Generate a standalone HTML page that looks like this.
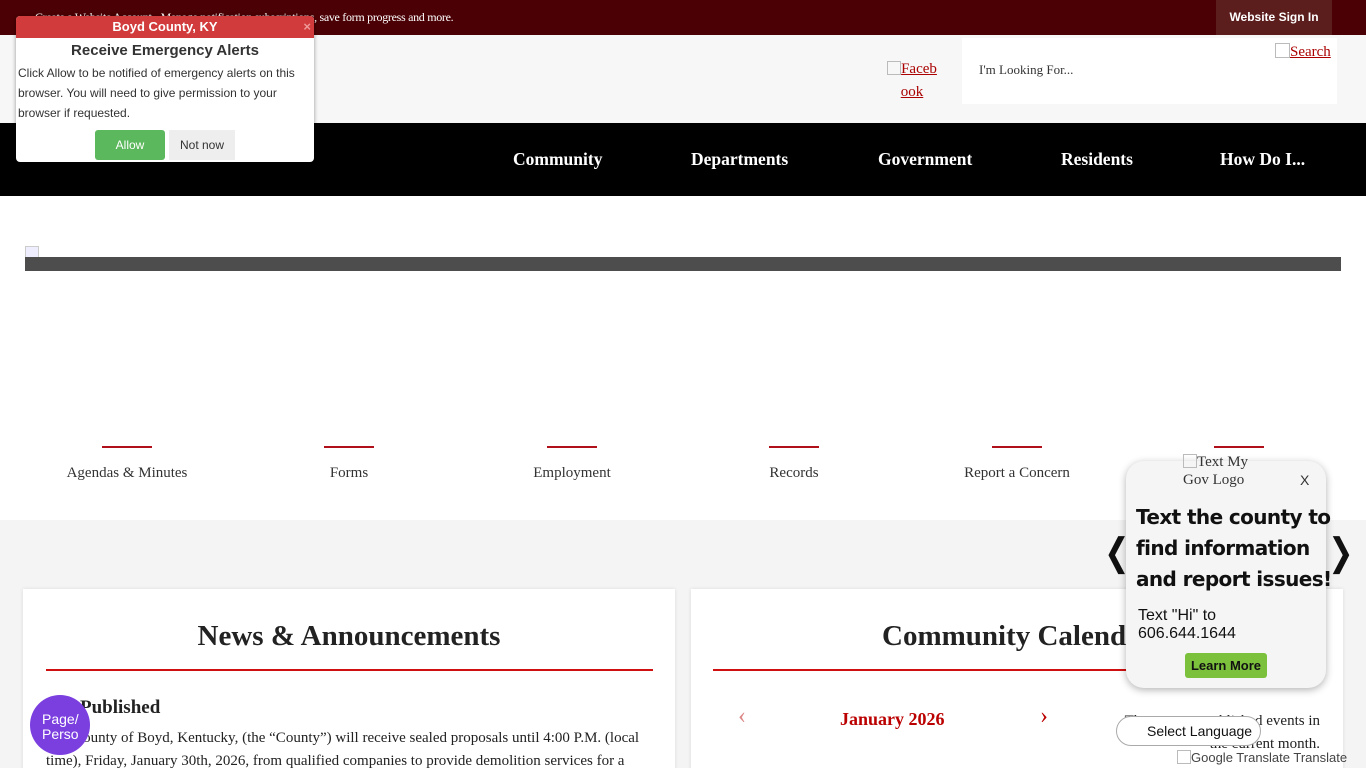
<!DOCTYPE html>
<html><head><style>
*{margin:0;padding:0;box-sizing:border-box}
html,body{width:1366px;height:768px;overflow:hidden}
body{position:relative;background:#f4f4f4;font-family:"Liberation Serif",serif}
.abs{position:absolute}
</style></head><body>
<div class="abs" style="left:0;top:0;width:1366px;height:35px;background:#4a0004"></div>
<div class="abs" style="left:35px;top:10px;color:#fff;font-size:12px;letter-spacing:-0.3px">Create a Website Account - Manage notification subscriptions, save form progress and more.</div>
<div class="abs" style="left:1216px;top:0;width:116px;height:35px;background:#5c1d1d;color:#fff;font:bold 12px 'Liberation Sans',sans-serif;text-align:center;line-height:35px">Website Sign In</div>
<div class="abs" style="left:0;top:35px;width:1366px;height:88px;background:#f7f7f7"></div>
<div class="abs" style="left:884px;top:58px;width:56px;text-align:center;color:#a00;font-size:15px;line-height:23px"><span style="display:inline-block;width:14px;height:14px;border:1px solid #bbb;vertical-align:-2px"></span><u>Faceb</u><br><u>ook</u></div>
<div class="abs" style="left:962px;top:38px;width:375px;height:66px;background:#fff"></div>
<div class="abs" style="left:979px;top:62px;font-size:13px;color:#333">I'm Looking For...</div>
<div class="abs" style="left:1275px;top:43px;color:#a00;font-size:15px"><span style="display:inline-block;width:15px;height:15px;border:1px solid #bbb;vertical-align:-2px"></span><u>Search</u></div>
<div class="abs" style="left:0;top:123px;width:1366px;height:73px;background:#000"></div>
<div class="abs" style="top:149px;left:0;width:1366px;color:#fff;font-weight:bold;font-size:17.5px">
<span class="abs" style="left:513px">Community</span><span class="abs" style="left:691px">Departments</span><span class="abs" style="left:878px">Government</span><span class="abs" style="left:1061px">Residents</span><span class="abs" style="left:1220px">How Do I...</span></div>
<div class="abs" style="left:0;top:196px;width:1366px;height:324px;background:#fff"></div>
<div class="abs" style="left:25px;top:246px;width:14px;height:16px;border:1px solid #ccc;background:#eef"></div>
<div class="abs" style="left:25px;top:257px;width:1316px;height:14px;background:#4d4d4d"></div>
<div class="abs" style="left:0;top:446px;width:1366px;font-size:15px;color:#333">
<div class="abs" style="left:27px;width:200px;text-align:center"><div style="width:50px;height:2px;background:#b0101a;margin:0 auto 17px"></div>Agendas &amp; Minutes</div>
<div class="abs" style="left:249px;width:200px;text-align:center"><div style="width:50px;height:2px;background:#b0101a;margin:0 auto 17px"></div>Forms</div>
<div class="abs" style="left:472px;width:200px;text-align:center"><div style="width:50px;height:2px;background:#b0101a;margin:0 auto 17px"></div>Employment</div>
<div class="abs" style="left:694px;width:200px;text-align:center"><div style="width:50px;height:2px;background:#b0101a;margin:0 auto 17px"></div>Records</div>
<div class="abs" style="left:917px;width:200px;text-align:center"><div style="width:50px;height:2px;background:#b0101a;margin:0 auto 17px"></div>Report a Concern</div>
<div class="abs" style="left:1139px;width:200px;text-align:center"><div style="width:50px;height:2px;background:#b0101a;margin:0 auto 17px"></div></div>
</div>
<div class="abs" style="left:23px;top:589px;width:652px;height:190px;background:#fff;box-shadow:0 0 4px rgba(0,0,0,.1)"></div>
<div class="abs" style="left:23px;top:620px;width:652px;text-align:center;font-size:29px;font-weight:bold;color:#222">News &amp; Announcements</div>
<div class="abs" style="left:46px;top:669px;width:607px;height:2px;background:#d01010"></div>
<div class="abs" style="left:80px;top:697px;font-size:19px;font-weight:bold;color:#222">Published</div>
<div class="abs" style="left:46px;top:727px;width:610px;font-size:15px;line-height:23px;color:#222">The County of Boyd, Kentucky, (the “County”) will receive sealed proposals until 4:00 P.M. (local time), Friday, January 30th, 2026, from qualified companies to provide demolition services for a</div>
<div class="abs" style="left:691px;top:589px;width:652px;height:190px;background:#fff;box-shadow:0 0 4px rgba(0,0,0,.1)"></div>
<div class="abs" style="left:882px;top:620px;font-size:29px;font-weight:bold;color:#222">Community Calendar</div>
<div class="abs" style="left:713px;top:669px;width:607px;height:2px;background:#d01010"></div>
<div class="abs" style="left:738px;top:703px;font-size:24px;color:#d88">‹</div>
<div class="abs" style="left:840px;top:709px;font-size:18px;font-weight:bold;color:#b00">January 2026</div>
<div class="abs" style="left:1040px;top:703px;font-size:24px;color:#b00">›</div>
<div class="abs" style="left:1120px;top:710px;width:200px;text-align:right;font-size:15px;line-height:23px;color:#222">There are no published events in the current month.</div>
<div class="abs" style="left:1101px;top:530px;font-size:38px;color:#111;transform:scaleX(.8)">❮</div>
<div class="abs" style="left:1325px;top:530px;font-size:38px;color:#111;transform:scaleX(.8)">❯</div>
<div class="abs" style="left:1126px;top:461px;width:200px;height:227px;background:#f5f5f5;border-radius:18px;box-shadow:0 2px 8px rgba(0,0,0,.3)"></div>
<div class="abs" style="left:1183px;top:453px;font-size:15px;line-height:18px;color:#333"><span style="display:inline-block;width:14px;height:14px;border:1px solid #bbb;vertical-align:-2px"></span>Text My<br>Gov Logo</div>
<div class="abs" style="left:1300px;top:472px;font:14px 'Liberation Sans',sans-serif;color:#333">X</div>
<div class="abs" style="left:1136px;top:502px;font:bold 20px/31px 'DejaVu Sans',sans-serif;color:#111;letter-spacing:-0.6px;white-space:nowrap">Text the county to<br>find information<br>and report issues!</div>
<div class="abs" style="left:1138px;top:607px;font:16px/18px 'Liberation Sans',sans-serif;color:#111">Text "Hi" to<br>606.644.1644</div>
<div class="abs" style="left:1185px;top:653px;width:82px;height:25px;background:#7cc13c;border-radius:3px;font:bold 13px/25px 'Liberation Sans',sans-serif;text-align:center;color:#111">Learn More</div>
<div class="abs" style="left:1116px;top:716px;width:145px;height:30px;background:#fff;border:1px solid #aaa;border-radius:15px;font:14px/28px 'Liberation Sans',sans-serif;color:#111;padding-left:30px">Select Language</div>
<div class="abs" style="left:1177px;top:750px;font:13px 'Liberation Sans',sans-serif;color:#444"><span style="display:inline-block;width:14px;height:14px;border:1px solid #bbb;vertical-align:-2px"></span>Google Translate Translate</div>
<div class="abs" style="left:30px;top:695px;width:60px;height:60px;border-radius:50%;background:#7b3fe0;color:#fff;font:14px/15px 'Liberation Sans',sans-serif;padding:17px 0 0 12px;overflow:hidden">Page/<br>Perso</div>
<div class="abs" style="left:16px;top:16px;width:298px;height:146px;background:#fff;border-radius:4px;box-shadow:0 1px 4px rgba(0,0,0,.4);font-family:'Liberation Sans',sans-serif;overflow:hidden">
<div style="height:22px;background:#d13b3b;color:#fff;font-weight:bold;font-size:13px;text-align:center;line-height:22px">Boyd County, KY<span style="position:absolute;right:3px;top:0;color:#e99">×</span></div>
<div style="text-align:center;font-weight:bold;font-size:15px;color:#333;margin-top:4px">Receive Emergency Alerts</div>
<div style="font-size:12px;line-height:20px;color:#333;padding:2px 2px;margin-top:2px">Click Allow to be notified of emergency alerts on this browser. You will need to give permission to your browser if requested.</div>
<div style="position:absolute;left:79px;top:114px;width:70px;height:30px;background:#5cb85c;border-radius:3px;color:#fff;font-size:12px;text-align:center;line-height:30px">Allow</div>
<div style="position:absolute;left:153px;top:114px;width:66px;height:30px;background:#eee;color:#333;font-size:12px;text-align:center;line-height:30px">Not now</div>
</div>
</body></html>
